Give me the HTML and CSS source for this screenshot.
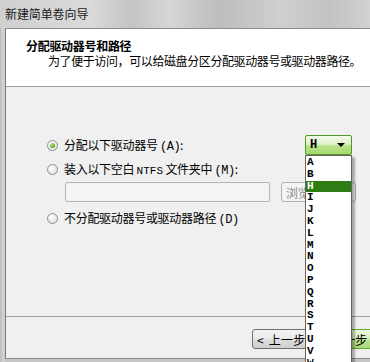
FILE: index.html
```html
<!DOCTYPE html>
<html lang="zh-CN">
<head>
    <meta charset="UTF-8">
    <title>新建简单卷向导</title>
    <link rel="stylesheet" href="styles.css">
</head>
<body>
    <div class="window">
        <div class="titlebar">新建简单卷向导</div>
        <div class="frame">
            <div class="header">
                <div class="header-title">分配驱动器号和路径</div>
                <div class="header-sub">为了便于访问，可以给磁盘分区分配驱动器号或驱动器路径。</div>
            </div>

            <div class="body">
                <div class="row">
                    <span class="radio checked"></span>
                    <span class="label">分配以下驱动器号 <span class="key">(A)</span>:</span>
                    <div class="combo">
                        <span class="combo-value">H</span>
                        <span class="combo-arrow"></span>
                        <ul class="combo-list">
                            <li>A</li>
                            <li>B</li>
                            <li class="selected">H</li>
                            <li>I</li>
                            <li>J</li>
                            <li>K</li>
                            <li>L</li>
                            <li>M</li>
                            <li>N</li>
                            <li>O</li>
                            <li>P</li>
                            <li>Q</li>
                            <li>R</li>
                            <li>S</li>
                            <li>T</li>
                            <li>U</li>
                            <li>V</li>
                            <li>W</li>
                        </ul>
                    </div>
                </div>
                <div class="row row-2">
                    <span class="radio"></span>
                    <span class="label">装入以下空白 <span class="mono">NTFS</span> 文件夹中 <span class="key">(M)</span>:</span>
                </div>
                <div class="row row-input">
                    <div class="path-input"></div>
                    <div class="btn btn-disabled">浏览(R)...</div>
                </div>
                <div class="row row-3">
                    <span class="radio"></span>
                    <span class="label">不分配驱动器号或驱动器路径 <span class="key">(D)</span></span>
                </div>
            </div>

            <div class="footer">
                <div class="btn">&lt; 上一步(B)</div>
                <div class="btn btn-default">下一步 (N) &gt;</div>
            </div>
        </div>
    </div>
</body>
</html>
```

FILE: styles.css
```css
* {
    margin: 0;
    padding: 0;
    box-sizing: border-box;
}

body {
    width: 370px;
    height: 362px;
    overflow: hidden;
    font-family: "Noto Sans CJK SC", "Liberation Sans", sans-serif;
    font-size: 12px;
    color: #000;
}

.window {
    width: 370px;
    height: 362px;
    overflow: hidden;
    background: linear-gradient(90deg, #b9b9b9 0px, #d4d4d4 3px, #c6c6c6 6px);
    display: flex;
    flex-direction: column;
}

.titlebar {
    height: 28px;
    padding: 6px 0 0 5px;
    line-height: 16px;
    letter-spacing: -0.1px;
    color: #1a1a1a;
    background: linear-gradient(90deg, #d0d0d0 0px, #dadada 90px, #c4c4c4 130px, #d6d6d6 170px, #bdbdbd 220px, #cfcfcf 280px, #c2c2c2 330px, #d2d2d2 370px);
}

.frame {
    margin-left: 5px;
    width: 365px;
    border-top: 1px solid #8c8c8c;
    border-left: 1px solid #7a7a7a;
    border-bottom: 1px solid #8c8c8c;
    display: flex;
    flex-direction: column;
}

.header {
    height: 58px;
    background-color: #fff;
    border-bottom: 1px solid #a0a0a0;
    padding: 10px 0 0 20px;
}

.header-title {
    font-weight: bold;
    line-height: 13px;
    letter-spacing: -0.3px;
}

.header-sub {
    margin-top: 2px;
    padding-left: 22px;
    line-height: 13px;
    letter-spacing: -0.4px;
    white-space: nowrap;
}

.body {
    height: 230px;
    background-color: #f0f0f0;
    border-bottom: 1px solid #a0a0a0;
    padding: 48px 0 0 41px;
}

.row {
    height: 20px;
    display: flex;
    align-items: center;
    white-space: nowrap;
}

.row-2 {
    margin-top: 4px;
}

.row-input {
    margin-top: 3px;
    padding-left: 18px;
}

.row-3 {
    margin-top: 6px;
}

.label {
    margin-left: 6px;
    letter-spacing: -0.3px;
}

.key {
    font-family: "Liberation Mono", monospace;
    font-size: 12px;
    letter-spacing: -0.5px;
}

.mono {
    font-family: "Liberation Mono", monospace;
    font-size: 11px;
    letter-spacing: 0;
}

.radio {
    width: 11px;
    height: 11px;
    border-radius: 50%;
    border: 1px solid #8e8f8f;
    background: radial-gradient(circle at 40% 35%, #ffffff 0%, #e9e9e9 60%, #cfcfcf 100%);
    position: relative;
}

.radio.checked::after {
    content: "";
    position: absolute;
    left: 2px;
    top: 2px;
    width: 5px;
    height: 5px;
    border-radius: 50%;
    background: radial-gradient(circle at 40% 35%, #b9ec84 0%, #5fae2a 60%, #3d7e16 100%);
}

.combo {
    position: relative;
    margin-left: auto;
    margin-right: 18px;
    width: 47px;
    height: 20px;
    border: 1px solid #4f9a26;
    border-radius: 2px;
    background: linear-gradient(#f4fbec 0%, #dff3c8 45%, #b9e38c 55%, #a6d86f 100%);
    display: flex;
    align-items: center;
    padding-left: 4px;
}

.combo-value {
    font-family: "Liberation Mono", monospace;
    font-weight: bold;
    font-size: 12px;
}

.combo-arrow {
    margin-left: auto;
    margin-right: 6px;
    width: 0;
    height: 0;
    border-left: 4px solid transparent;
    border-right: 4px solid transparent;
    border-top: 4px solid #000;
}

.combo-list {
    position: absolute;
    left: -1px;
    top: 19px;
    width: 47px;
    height: 230px;
    list-style: none;
    background-color: #fff;
    border: 1px solid #646464;
    box-shadow: 3px 2px 2px rgba(0, 0, 0, 0.3);
    padding-top: 1px;
    z-index: 10;
}

.combo-list li {
    height: 11.8px;
    line-height: 11.8px;
    padding-left: 1px;
    font-family: "Liberation Mono", monospace;
    font-weight: bold;
    font-size: 11px;
}

.combo-list li.selected {
    background-color: #2e7d14;
    color: #fff;
}

.path-input {
    width: 205px;
    height: 20px;
    border: 1px solid #b4b4b4;
    border-radius: 2px;
    background-color: #f4f4f4;
}

.btn {
    height: 20px;
    width: 75px;
    border: 1px solid #707070;
    border-radius: 3px;
    background: linear-gradient(#f2f2f2 0%, #ebebeb 45%, #dddddd 55%, #cfcfcf 100%);
    display: flex;
    align-items: center;
    padding-left: 4px;
    white-space: nowrap;
    letter-spacing: 0.2px;
    word-spacing: 2px;
}

.btn-disabled {
    margin-left: 11px;
    border-color: #adb2b5;
    background: #f4f4f4;
    color: #8a8a8a;
    letter-spacing: -0.3px;
    word-spacing: 0;
}

.footer {
    height: 41px;
    background-color: #f0f0f0;
    display: flex;
    gap: 2px;
    padding: 12px 0 0 246px;
}

.btn-default {
    border-color: #5fae2a;
    background: linear-gradient(#eef9e2 0%, #d9f0bd 45%, #bde394 55%, #a9d977 100%);
    padding-left: 5px;
}
```
